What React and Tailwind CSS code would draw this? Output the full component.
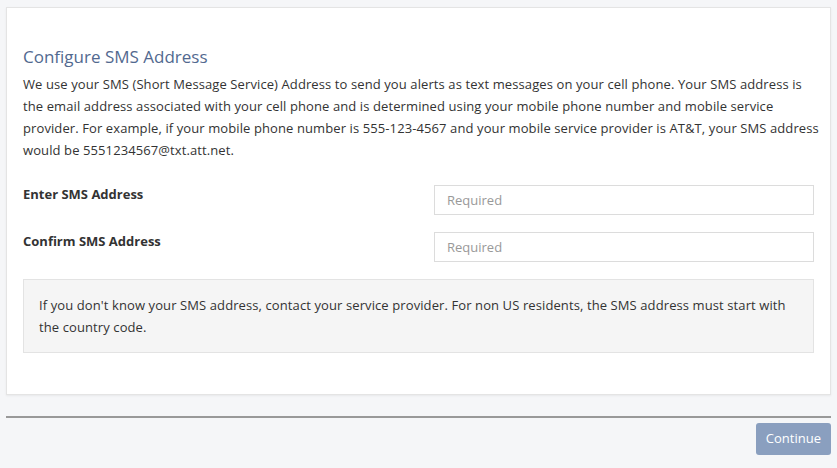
const intro = [
  "We use your SMS (Short Message Service) Address to send you alerts as text messages on your cell phone. Your SMS address is",
  "the email address associated with your cell phone and is determined using your mobile phone number and mobile service",
  "provider. For example, if your mobile phone number is 555-123-4567 and your mobile service provider is AT&T, your SMS address",
  "would be 5551234567@txt.att.net.",
];

const note = [
  "If you don't know your SMS address, contact your service provider. For non US residents, the SMS address must start with",
  "the country code.",
];

function Field({ label }) {
  return (
    <div className="flex items-start">
      <label className="flex-1 font-bold leading-[18px]">{label}</label>
      <input
        placeholder="Required"
        className="h-[30px] w-[380px] border border-[#dcdcdc] px-3 text-[13px] placeholder:text-[#999] outline-none"
      />
    </div>
  );
}

export default function App() {
  return (
    <div className="min-h-[468px] bg-[#f5f6f8] px-[6px] pt-[7px] font-['Open_Sans',sans-serif] text-[13px] text-[#333]">
      <div className="border border-[#e4e4e4] bg-white px-4 pt-[37px] pb-[41px] shadow-[0_1px_2px_rgba(0,0,0,0.06)]">
        <h1 className="text-[17px] leading-[24px] text-[#52698f]">Configure SMS Address</h1>
        <p className="mt-[4px] leading-[22px] tracking-[0.1px]">
          {intro.map((line) => (
            <span key={line} className="block whitespace-nowrap">
              {line}
            </span>
          ))}
        </p>

        <div className="mt-[24px] flex flex-col gap-[17px]">
          <Field label="Enter SMS Address" />
          <Field label="Confirm SMS Address" />
        </div>

        <div className="mt-[17px] border border-[#e3e3e3] bg-[#f5f5f5] px-[15px] py-[14px] leading-[22px] tracking-[0.1px]">
          {note.map((line) => (
            <span key={line} className="block whitespace-nowrap">
              {line}
            </span>
          ))}
        </div>
      </div>

      <div className="mt-[21px] h-[2px] bg-[#999]" />

      <div className="mt-[5px] flex justify-end">
        <button className="h-[32px] rounded-[3px] bg-[#8a9fbf] px-[10px] text-[13px] text-white">Continue</button>
      </div>
    </div>
  );
}
